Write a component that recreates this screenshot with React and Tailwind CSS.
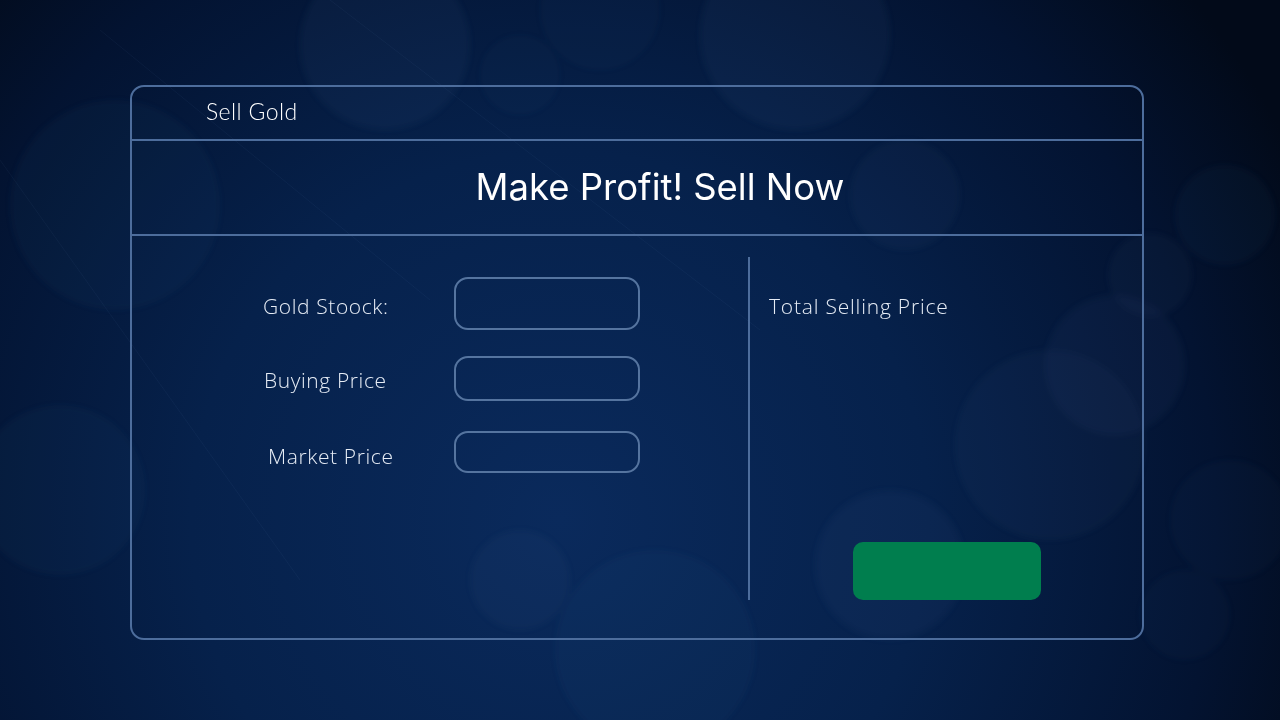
import React from "react";

const bokeh = [
  [385, 45, 85, 0.05],
  [520, 75, 40, 0.03],
  [795, 35, 95, 0.05],
  [115, 205, 105, 0.035],
  [905, 195, 55, 0.04],
  [1225, 215, 50, 0.035],
  [1150, 275, 42, 0.04],
  [1115, 365, 70, 0.045],
  [1050, 445, 95, 0.04],
  [890, 565, 75, 0.045],
  [655, 650, 100, 0.035],
  [520, 580, 50, 0.04],
  [60, 490, 85, 0.035],
  [1230, 520, 60, 0.03],
  [1185, 615, 45, 0.03],
  [600, 10, 60, 0.03],
];

function Background() {
  return (
    <svg className="absolute inset-0 h-full w-full" viewBox="0 0 1280 720" preserveAspectRatio="none">
      <defs>
        <radialGradient id="bg" cx="560" cy="520" r="820" gradientUnits="userSpaceOnUse">
          <stop offset="0" stopColor="#0a2a5c" />
          <stop offset="0.45" stopColor="#06214b" />
          <stop offset="0.8" stopColor="#031331" />
          <stop offset="1" stopColor="#020a19" />
        </radialGradient>
        <filter id="soft" x="-20%" y="-20%" width="140%" height="140%">
          <feGaussianBlur stdDeviation="3" />
        </filter>
      </defs>
      <rect width="1280" height="720" fill="url(#bg)" />
      <g filter="url(#soft)">
        {bokeh.map(([cx, cy, r, o], i) => (
          <circle key={i} cx={cx} cy={cy} r={r} fill="#6f8fc0" opacity={o * 1.1} />
        ))}
      </g>
      <g stroke="#8fb0e0" strokeWidth="0.7" opacity="0.07">
        <line x1="330" y1="0" x2="760" y2="330" />
        <line x1="100" y1="30" x2="430" y2="300" />
        <line x1="0" y1="160" x2="300" y2="580" />
      </g>
    </svg>
  );
}

function Field({ label, h, labelShift = "" }) {
  return (
    <div className="flex items-center">
      <span className={`w-[191px] text-[21px] font-light tracking-[0.6px] text-[#e6ecf5] ${labelShift}`}>{label}</span>
      <div className={`w-[186px] ${h} rounded-[14px] border-2 border-[#55749f]`} />
    </div>
  );
}

export default function App() {
  return (
    <div className="relative h-[720px] w-full overflow-hidden" style={{ fontFamily: "'Open Sans', Roboto, sans-serif" }}>
      <Background />
      <div className="relative pl-[130px] pt-[85px]">
        <div className="flex h-[555px] w-[1014px] flex-col rounded-[14px] border-2 border-[#4d6d9c]">
          <div className="flex h-[54px] items-center border-b-2 border-[#4d6d9c] pb-[4px] pl-[74px]">
            <span className="text-[23px] font-light tracking-[0.4px] text-white" style={{ fontFamily: "Lato, sans-serif" }}>
              Sell Gold
            </span>
          </div>
          <div className="flex h-[95px] items-center justify-center border-b-2 border-[#4d6d9c] pl-[46px]">
            <span className="text-[36.5px] font-normal text-white" style={{ fontFamily: "Inter, sans-serif" }}>
              Make Profit! Sell Now
            </span>
          </div>
          <div className="flex flex-1">
            <div className="flex w-[616px] flex-col pl-[131px] pt-[41px]">
              <Field label="Gold Stoock:" h="h-[53px]" labelShift="pt-[6px]" />
              <div className="h-[26px]" />
              <Field label="Buying Price" h="h-[45px]" labelShift="pl-[1px] pt-[4px]" />
              <div className="h-[30px]" />
              <Field label="Market Price" h="h-[42px]" labelShift="pl-[5px] pt-[10px]" />
            </div>
            <div className="mt-[21px] mb-[38px] w-[2px] bg-[#4d6d9c]" />
            <div className="flex flex-1 flex-col pl-[19px] pt-[55px]">
              <span className="text-[21px] font-light tracking-[0.8px] text-[#e6ecf5]">Total Selling Price</span>
              <div className="mt-[219px] ml-[84px] h-[58px] w-[188px] rounded-[10px] bg-[#007e4e]" />
            </div>
          </div>
        </div>
      </div>
    </div>
  );
}
